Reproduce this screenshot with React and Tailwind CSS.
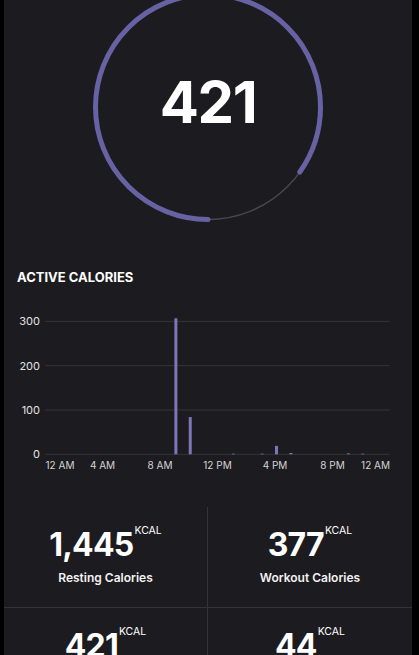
import React from "react";

const bars = [
  { h: 9, v: 307 },
  { h: 10, v: 84 },
  { h: 13, v: 1.5 },
  { h: 15, v: 1.5 },
  { h: 16, v: 19 },
  { h: 17, v: 3 },
  { h: 21, v: 2 },
  { h: 22, v: 1.5 },
];

const xLabels = [
  { t: "12 AM", x: 41.5, a: "start" },
  { t: "4 AM", x: 98.5, a: "middle" },
  { t: "8 AM", x: 156, a: "middle" },
  { t: "12 PM", x: 213.5, a: "middle" },
  { t: "4 PM", x: 271, a: "middle" },
  { t: "8 PM", x: 328.5, a: "middle" },
  { t: "12 AM", x: 386, a: "end" },
];

const stats = [
  { value: "1,445", label: "Resting Calories" },
  { value: "377", label: "Workout Calories" },
  { value: "421", label: "Active Calories" },
  { value: "44", label: "Dietary Calories" },
];

function Ring() {
  const r = 112.5;
  const c = 2 * Math.PI * r;
  const dash = (305 / 360) * c;
  return (
    <div className="relative mx-auto -mt-[8px] h-[230px] w-[230px]">
      <svg width="230" height="230" viewBox="0 0 230 230">
        <circle cx="115" cy="115" r={r} fill="none" stroke="#48474b" strokeWidth="1.5" />
        <circle
          cx="115"
          cy="115"
          r={r}
          fill="none"
          stroke="#6762a3"
          strokeWidth="5"
          strokeLinecap="round"
          strokeDasharray={`${dash} ${c}`}
          transform="rotate(90 115 115)"
        />
      </svg>
      <div className="absolute inset-0 flex items-center justify-center pb-[10px]">
        <span className="text-[58px] font-bold leading-none tracking-tight text-white">421</span>
      </div>
    </div>
  );
}

function Chart() {
  const y0 = 154.3;
  const k = 0.443;
  return (
    <svg width="408" height="180" viewBox="0 0 408 180" className="mt-[15px] block">
      {[0, 100, 200, 300].map((v) => (
        <g key={v}>
          <line x1="41" x2="386" y1={y0 - v * k} y2={y0 - v * k} stroke="#353438" strokeWidth="1" />
          <text
            x="36"
            y={y0 - v * k + 4}
            textAnchor="end"
            fontSize="11"
            fill="#e2e2e2"
            fontFamily="Inter, sans-serif"
          >
            {v}
          </text>
        </g>
      ))}
      {bars.map((b) => {
        const h = b.v * k;
        return (
          <rect key={b.h} x={41 + b.h * 14.375} y={y0 - h} width="3" height={h} fill="#7b77b8" />
        );
      })}
      {xLabels.map((l, i) => (
        <text
          key={i}
          x={l.x}
          y="168.6"
          textAnchor={l.a}
          fontSize="10"
          fill="#d4d4d4"
          fontFamily="Inter, sans-serif"
        >
          {l.t}
        </text>
      ))}
    </svg>
  );
}

function Stat({ value, label, left, top }) {
  return (
    <div
      className={`flex h-[101px] flex-col items-center pt-[22px] ${left ? "border-r border-[#343337]" : ""} ${
        top ? "border-b border-[#343337]" : ""
      }`}
    >
      <div className="flex items-start">
        <span className="text-[32px] font-bold leading-none tracking-tight text-white">{value}</span>
        <span className="-mt-[3px] ml-[1px] text-[10.5px] leading-none text-white">KCAL</span>
      </div>
      <div className="mt-[9px] text-[12px] font-semibold leading-4 text-[#f2f2f2]">{label}</div>
    </div>
  );
}

export default function App() {
  return (
    <div className="flex h-screen overflow-hidden bg-black" style={{ fontFamily: "Inter, sans-serif" }}>
      <div className="ml-[4px] w-[408px] overflow-hidden bg-[#1c1b1f]">
        <Ring />
        <h2 className="mt-[47px] px-[13px] text-[13px] font-bold leading-4 text-white">ACTIVE CALORIES</h2>
        <Chart />
        <div className="mt-[27px] grid grid-cols-2">
          {stats.map((s, i) => (
            <Stat key={s.label} {...s} left={i % 2 === 0} top={i < 2} />
          ))}
        </div>
      </div>
    </div>
  );
}
